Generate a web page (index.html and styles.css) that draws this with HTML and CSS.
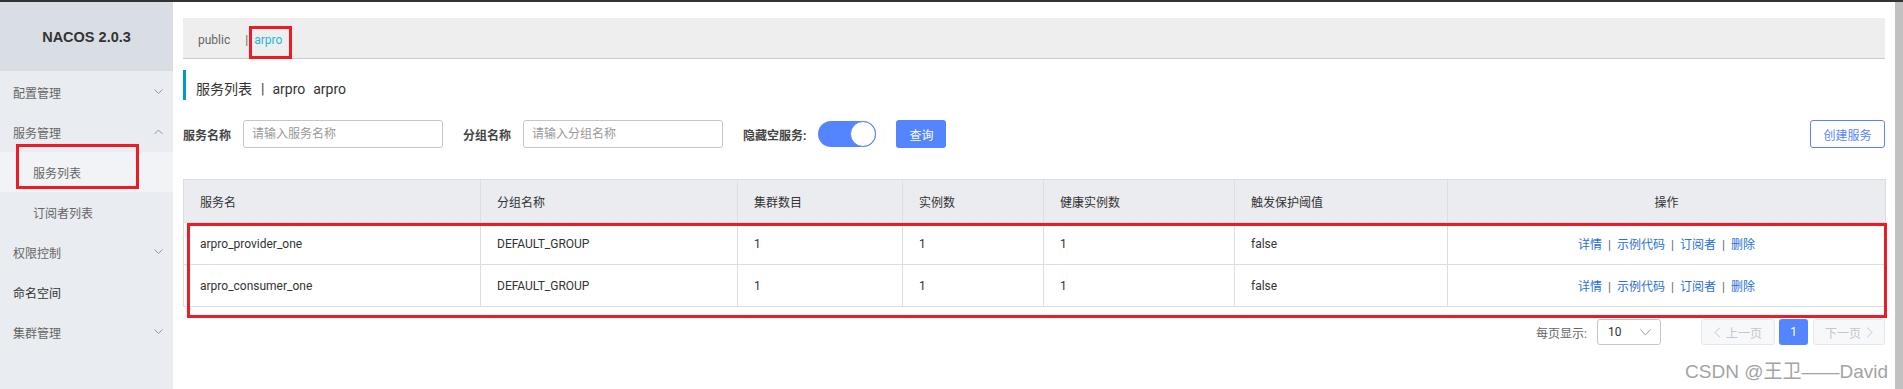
FILE: index.html
```html
<!DOCTYPE html>
<html lang="zh-CN">
<head>
  <meta charset="UTF-8" />
  <title>Nacos 服务列表</title>
  <link rel="stylesheet" href="styles.css">
</head>
<body>

  <div class="topline"></div>

  <div class="layout">
    <aside class="sidebar">
      <div class="brand">NACOS 2.0.3</div>
      <ul class="menu">
        <li>配置管理
          <svg class="chev" width="9" height="6" viewBox="0 0 9 6"><polyline points="0.5,0.5 4.5,4.5 8.5,0.5"/></svg>
        </li>
        <li>服务管理
          <svg class="chev" width="9" height="6" viewBox="0 0 9 6"><polyline points="0.5,5 4.5,1 8.5,5"/></svg>
        </li>
        <li class="sub active">服务列表</li>
        <li class="sub">订阅者列表</li>
        <li>权限控制
          <svg class="chev" width="9" height="6" viewBox="0 0 9 6"><polyline points="0.5,0.5 4.5,4.5 8.5,0.5"/></svg>
        </li>
        <li class="link">命名空间</li>
        <li>集群管理
          <svg class="chev" width="9" height="6" viewBox="0 0 9 6"><polyline points="0.5,0.5 4.5,4.5 8.5,0.5"/></svg>
        </li>
      </ul>
      <div class="mark mark-side"></div>
    </aside>

    <main class="main">
      <div class="ns-bar">
        <span class="ns">public</span><span class="ns-sep">|</span><span class="ns current">arpro</span>
        <div class="mark mark-ns"></div>
      </div>

      <div class="page-title">
        服务列表<span class="title-sep">|</span><span class="title-ns">arpro</span><span>arpro</span>
      </div>

      <div class="filters">
        <div class="field">
          <label for="service-name">服务名称</label>
          <input type="text" id="service-name" placeholder="请输入服务名称" />
        </div>
        <div class="field">
          <label for="group-name">分组名称</label>
          <input type="text" id="group-name" placeholder="请输入分组名称" />
        </div>
        <div class="field">
          <label>隐藏空服务:</label>
          <span class="switch"><span class="knob"></span></span>
        </div>
        <button class="btn-primary">查询</button>
        <button class="btn-outline">创建服务</button>
      </div>

      <div class="table-wrap">
        <table class="services">
          <colgroup>
            <col style="width:297px">
            <col style="width:257px">
            <col style="width:165px">
            <col style="width:141px">
            <col style="width:191px">
            <col style="width:213px">
            <col style="width:438px">
          </colgroup>
          <thead>
            <tr>
              <th>服务名</th>
              <th>分组名称</th>
              <th>集群数目</th>
              <th>实例数</th>
              <th>健康实例数</th>
              <th>触发保护阈值</th>
              <th class="ops">操作</th>
            </tr>
          </thead>
          <tbody>
            <tr>
              <td>arpro_provider_one</td>
              <td>DEFAULT_GROUP</td>
              <td>1</td>
              <td>1</td>
              <td>1</td>
              <td>false</td>
              <td class="ops">
                <a>详情</a><span class="sep">|</span><a>示例代码</a><span class="sep">|</span><a>订阅者</a><span class="sep">|</span><a>删除</a>
              </td>
            </tr>
            <tr>
              <td>arpro_consumer_one</td>
              <td>DEFAULT_GROUP</td>
              <td>1</td>
              <td>1</td>
              <td>1</td>
              <td>false</td>
              <td class="ops">
                <a>详情</a><span class="sep">|</span><a>示例代码</a><span class="sep">|</span><a>订阅者</a><span class="sep">|</span><a>删除</a>
              </td>
            </tr>
          </tbody>
        </table>
        <div class="mark mark-table"></div>
      </div>

      <div class="pager">
        <span class="page-size-label">每页显示:</span>
        <span class="page-size">10
          <svg width="11" height="7" viewBox="0 0 11 7"><polyline points="0.5,0.5 5.5,6 10.5,0.5"/></svg>
        </span>
        <span class="page-btn prev">
          <svg width="7" height="11" viewBox="0 0 7 11"><polyline points="6,0.5 1,5.5 6,10.5"/></svg>上一页
        </span>
        <span class="page-btn current">1</span>
        <span class="page-btn next">下一页
          <svg width="7" height="11" viewBox="0 0 7 11"><polyline points="1,0.5 6,5.5 1,10.5"/></svg>
        </span>
      </div>
    </main>

    <div class="scrollbar"></div>
  </div>

  <div class="watermark">CSDN @王卫——David</div>

</body>
</html>
```

FILE: styles.css
```css
body {
  margin: 0;
  font-family: Roboto, "Noto Sans CJK SC", sans-serif;
  font-size: 12px;
  color: #333;
  background: #fff;
  position: relative;
  overflow: hidden;
}

.topline {
  height: 2px;
  background: #333;
}

.layout {
  display: flex;
  height: 387px;
}

/* sidebar */
.sidebar {
  width: 173px;
  flex-shrink: 0;
  background: #e9ecf0;
  position: relative;
}

.brand {
  height: 69px;
  background: #d9dde4;
  display: flex;
  align-items: center;
  justify-content: center;
  font-family: "Liberation Sans", sans-serif;
  font-weight: bold;
  font-size: 14.5px;
  color: #333;
}

.menu {
  list-style: none;
  margin: 0;
  padding: 1px 0 0;
}

.menu li {
  box-sizing: border-box;
  height: 40px;
  padding: 4px 0 0 13px;
  line-height: 36px;
  color: #666;
  position: relative;
}

.menu li.sub {
  padding-left: 33px;
}

.menu li.active {
  background: #f1f3f6;
}

.menu li.link {
  color: #333;
}

.chev {
  position: absolute;
  right: 10px;
  top: 17px;
  fill: none;
  stroke: #999;
  stroke-width: 1;
}

/* red annotation boxes */
.mark {
  position: absolute;
  border: 3px solid #ec1c24;
  box-sizing: border-box;
}

.mark-side {
  left: 16px;
  top: 142px;
  width: 123px;
  height: 45px;
}

/* main */
.main {
  flex: 1;
  min-width: 0;
  padding: 16px 10px 0;
  position: relative;
}

.scrollbar {
  width: 8px;
  flex-shrink: 0;
  background: #c1c1c1;
}

.ns-bar {
  position: relative;
  height: 36px;
  padding: 4px 0 0 15px;
  background: #eee;
  border-bottom: 1px solid #ccc;
  display: flex;
  align-items: center;
}

.ns {
  color: #666;
  margin-right: 15px;
}

.ns-sep {
  color: #666;
  margin-right: 6px;
}

.ns.current {
  color: #22b8e0;
}

.mark-ns {
  left: 66px;
  top: 8px;
  width: 43px;
  height: 33px;
}

.page-title {
  margin-top: 11px;
  height: 22px;
  padding: 8px 0 0 10px;
  line-height: 22px;
  border-left: 3px solid #09c;
  font-size: 14px;
  color: #333;
}

.title-sep {
  margin: 0 8px 0 9px;
}

.title-ns {
  margin-right: 8px;
}

.filters {
  margin-top: 20px;
  height: 28px;
  display: flex;
  align-items: center;
}

.field {
  display: flex;
  align-items: center;
  margin-right: 20px;
}

.field label {
  font-weight: bold;
  color: #444;
  margin-right: 12px;
}

.field input {
  width: 200px;
  height: 28px;
  box-sizing: border-box;
  border: 1px solid #c4c6cf;
  border-radius: 3px;
  padding: 0 8px;
  font-family: inherit;
  font-size: 12px;
  color: #333;
  outline: none;
}

.field input::placeholder {
  color: #999;
}

.switch {
  position: relative;
  width: 58px;
  height: 26px;
  border-radius: 13px;
  background: #5584ff;
}

.knob {
  position: absolute;
  right: 0;
  top: 0;
  width: 26px;
  height: 26px;
  box-sizing: border-box;
  border-radius: 50%;
  border: 1px solid #5584ff;
  background: #fff;
}

.btn-primary,
.btn-outline {
  height: 28px;
  border-radius: 3px;
  font-family: inherit;
  font-size: 12px;
  padding: 0;
  cursor: pointer;
}

.btn-primary {
  width: 50px;
  border: none;
  background: #5584ff;
  color: #fff;
}

.btn-outline {
  width: 75px;
  margin-left: auto;
  border: 1px solid #5584ff;
  background: #fff;
  color: #5584ff;
}

/* table */
.table-wrap {
  position: relative;
  margin-top: 31px;
}

.services {
  width: 1702px;
  table-layout: fixed;
  border-collapse: collapse;
}

.services th,
.services td {
  border: 1px solid #dcdee3;
  padding: 0 16px;
  text-align: left;
  white-space: nowrap;
}

.services th {
  height: 42px;
  background: #ebecf0;
  font-weight: normal;
  color: #333;
}

.services td {
  height: 41px;
  color: #333;
}

.services .ops {
  text-align: center;
}

.ops a {
  color: #2a6fd6;
}

.ops .sep {
  color: #666;
  margin: 0 6px;
}

.mark-table {
  left: 4px;
  top: 44px;
  right: -2px;
  bottom: -11px;
}

/* pagination */
.pager {
  margin-top: 12px;
  height: 26px;
  display: flex;
  justify-content: flex-end;
  align-items: center;
}

.page-size-label {
  color: #666;
  margin-right: 10px;
}

.page-size {
  width: 64px;
  height: 26px;
  box-sizing: border-box;
  border: 1px solid #c4c6cf;
  border-radius: 3px;
  padding: 0 9px 0 10px;
  display: flex;
  align-items: center;
  justify-content: space-between;
  margin-right: 40px;
}

.page-size svg,
.page-btn svg {
  fill: none;
  stroke: #999;
  stroke-width: 1;
}

.page-btn {
  height: 26px;
  box-sizing: border-box;
  border-radius: 3px;
  display: flex;
  align-items: center;
  justify-content: center;
  gap: 5px;
}

.page-btn.prev,
.page-btn.next {
  background: #f7f8fa;
  border: 1px solid #e6e7eb;
  color: #c4c6cf;
}

.page-btn.prev svg,
.page-btn.next svg {
  stroke: #c4c6cf;
}

.page-btn.prev {
  width: 74px;
  margin-right: 4px;
}

.page-btn.current {
  width: 29px;
  background: #5584ff;
  color: #fff;
  margin-right: 5px;
}

.page-btn.next {
  width: 72px;
}

.watermark {
  position: absolute;
  right: 15px;
  top: 361px;
  font-family: "Liberation Sans", "Noto Sans CJK SC", sans-serif;
  font-size: 19px;
  line-height: 22px;
  color: #a3a3a3;
}
```
